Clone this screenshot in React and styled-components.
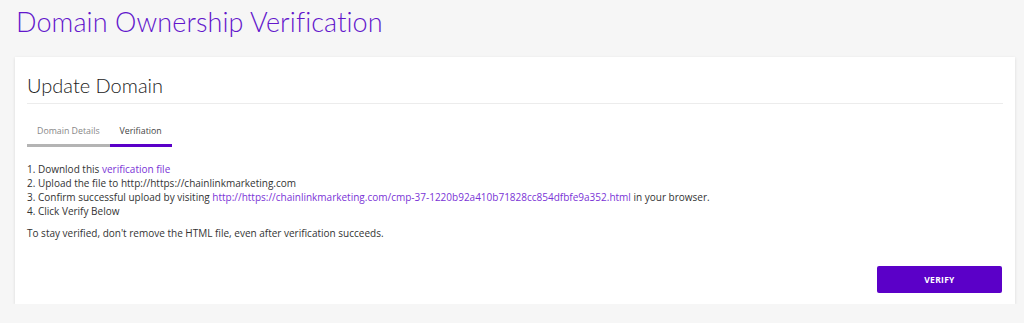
import React, { useState } from "react";
import styled, { createGlobalStyle } from "styled-components";

const GlobalStyle = createGlobalStyle`
  body {
    margin: 0;
    background: #f6f6f6;
    font-family: "Open Sans", "Liberation Sans", sans-serif;
  }
`;

const Page = styled.div`
  padding: 4px 9px 0 15px;
`;

const Title = styled.h1`
  margin: 0 0 17px 1px;
  font-family: Lato, "Noto Sans", sans-serif;
  font-weight: 300;
  font-size: 27px;
  line-height: 36px;
  color: #6316cc;
  letter-spacing: 0.1px;
`;

const Card = styled.div`
  background: #fff;
  box-shadow: 0 1px 3px rgba(0, 0, 0, 0.12);
  padding: 16px 12px 11px;
`;

const CardTitle = styled.h2`
  margin: 0;
  padding-bottom: 6px;
  border-bottom: 1px solid #ececec;
  font-family: Lato, "Noto Sans", sans-serif;
  font-weight: 300;
  font-size: 20px;
  line-height: 24px;
  color: #222;
`;

const Tabs = styled.div`
  display: flex;
  margin-top: 20px;
`;

const Tab = styled.button`
  border: none;
  background: none;
  padding: 0 10px 6px;
  font-family: "Open Sans", sans-serif;
  font-size: 8.8px;
  line-height: 14px;
  color: ${(p) => (p.$active ? "#444" : "#888")};
  border-bottom: 3px solid ${(p) => (p.$active ? "#5a00c8" : "#b4b4b4")};
  cursor: pointer;
`;

const Steps = styled.ol`
  list-style: none;
  margin: 15px 0 0;
  padding: 0;
  font-size: 10px;
  line-height: 14px;
  color: #333;
`;

const Note = styled.p`
  margin: 8px 0 0;
  font-size: 10px;
  line-height: 14px;
  color: #333;
`;

const Link = styled.a`
  color: #7a33d6;
  text-decoration: none;
`;

const Footer = styled.div`
  display: flex;
  justify-content: flex-end;
  margin-top: 26px;
`;

const VerifyButton = styled.button`
  width: 125px;
  height: 27px;
  margin-right: 1px;
  border: none;
  border-radius: 2px;
  background: #5b00c8;
  color: #fff;
  font-family: "Open Sans", sans-serif;
  font-weight: 700;
  font-size: 8.5px;
  letter-spacing: 0.3px;
  cursor: pointer;
`;

const url = "http://https://chainlinkmarketing.com";

export default function App() {
  const [tab, setTab] = useState("verify");
  return (
    <Page>
      <GlobalStyle />
      <Title>Domain Ownership Verification</Title>
      <Card>
        <CardTitle>Update Domain</CardTitle>
        <Tabs>
          <Tab $active={tab === "details"} onClick={() => setTab("details")}>
            Domain Details
          </Tab>
          <Tab $active={tab === "verify"} onClick={() => setTab("verify")}>
            Verifiation
          </Tab>
        </Tabs>
        <Steps>
          <li>
            1. Downlod this <Link href="#">verification file</Link>
          </li>
          <li>2. Upload the file to {url}</li>
          <li>
            3. Confirm successful upload by visiting{" "}
            <Link href="#">
              {url}/cmp-37-1220b92a410b71828cc854dfbfe9a352.html
            </Link>{" "}
            in your browser.
          </li>
          <li>4. Click Verify Below</li>
        </Steps>
        <Note>
          To stay verified, don't remove the HTML file, even after verification
          succeeds.
        </Note>
        <Footer>
          <VerifyButton>VERIFY</VerifyButton>
        </Footer>
      </Card>
    </Page>
  );
}
